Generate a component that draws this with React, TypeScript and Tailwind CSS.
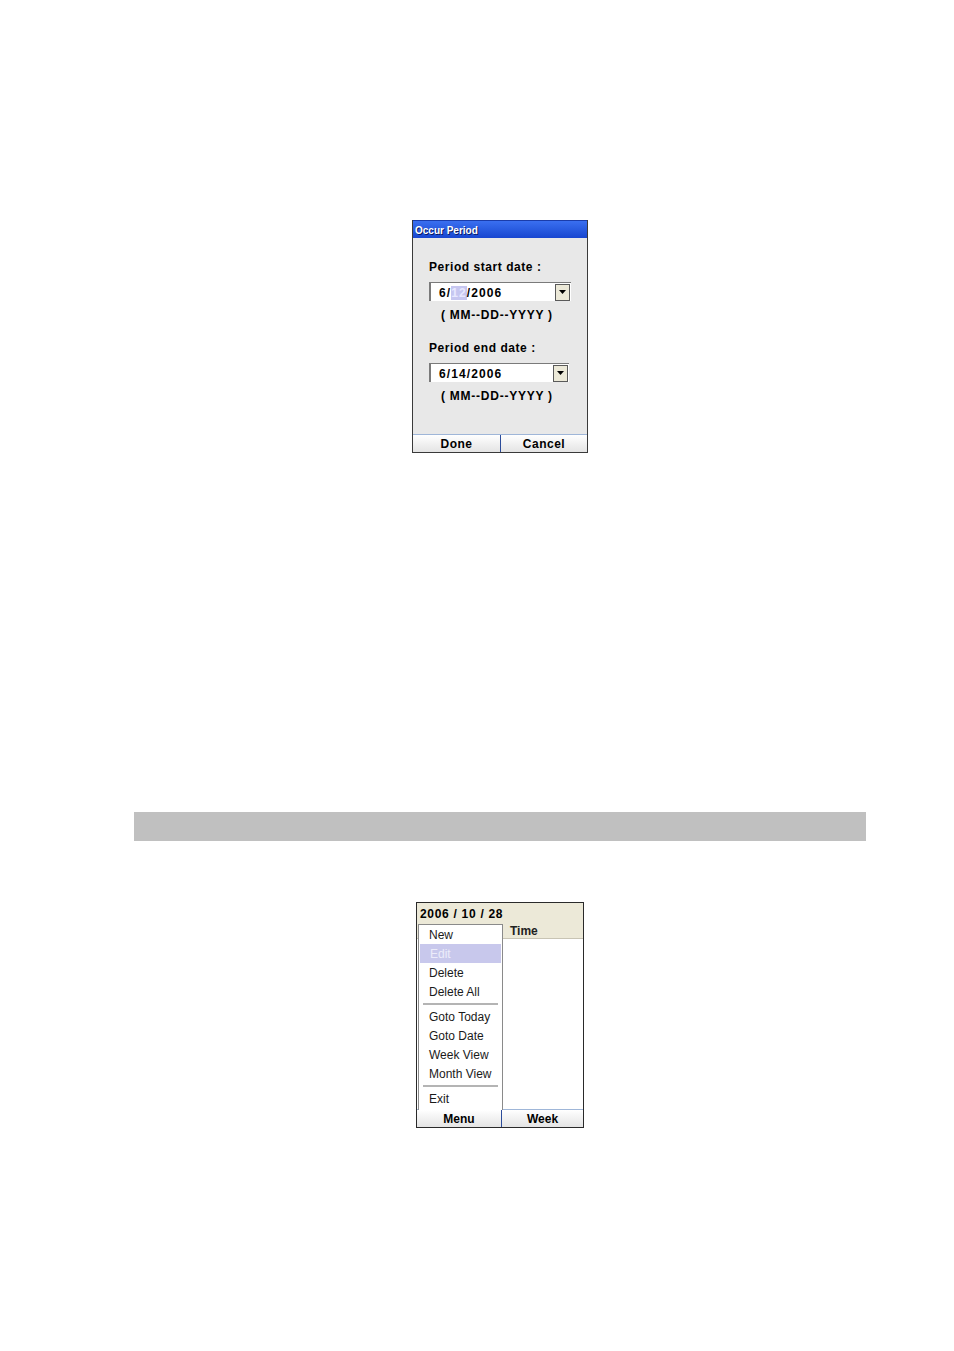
const font = { fontFamily: '"Liberation Sans", Arial, sans-serif' }

function DropArrow() {
  return (
    <div className="w-[15px] h-[17px] bg-[#ece9d8] border border-[#5a5a5a] flex items-center justify-center">
      <svg width="7" height="4" viewBox="0 0 7 4">
        <path d="M0 0 H7 L3.5 4 Z" fill="#000" />
      </svg>
    </div>
  )
}

function DateField({ width, children }: { width: string; children: React.ReactNode }) {
  return (
    <div className={`${width} h-[19px] bg-white border-t border-l-2 border-t-[#7a7a7a] border-l-[#7a7a7a] flex items-center justify-between pr-[1px]`}>
      <span className="pl-[8px] pt-[1px] text-[12px] font-bold text-black leading-none tracking-[1.1px]">{children}</span>
      <DropArrow />
    </div>
  )
}

function OccurPeriod() {
  return (
    <div className="ml-[412px] w-[176px] h-[233px] flex flex-col border border-[#3a3a3a] border-t-0 bg-[#e8e8e8]">
      <div className="h-[18px] bg-gradient-to-b from-[#3a6ff0] to-[#1846d0] border-t border-[#1a3caa] flex items-center pl-[2px] pt-[2px]">
        <span className="text-[10px] font-bold text-white leading-none [text-shadow:1px_1px_0_#0a1a60]">Occur Period</span>
      </div>
      <div className="flex-1 flex flex-col pl-[16px]">
        <div className="mt-[22px] h-[14px] text-[12px] font-bold text-black leading-[14px] tracking-[0.55px]">Period start date :</div>
        <div className="mt-[8px]">
          <DateField width="w-[142px]">
            6/<span className="bg-[#c6c6f0] text-[#e8e8ff]">12</span>/2006
          </DateField>
        </div>
        <div className="mt-[7px] pl-[12px] h-[14px] text-[12px] font-bold text-black leading-[14px] tracking-[0.75px]">( MM--DD--YYYY )</div>
        <div className="mt-[19px] h-[14px] text-[12px] font-bold text-black leading-[14px] tracking-[0.55px]">Period end date :</div>
        <div className="mt-[8px]">
          <DateField width="w-[140px]">6/14/2006</DateField>
        </div>
        <div className="mt-[7px] pl-[12px] h-[14px] text-[12px] font-bold text-black leading-[14px] tracking-[0.75px]">( MM--DD--YYYY )</div>
      </div>
      <div className="h-[18px] flex border-t border-[#9fb6d8] bg-gradient-to-b from-white to-[#e4e4e4]">
        <div className="w-[88px] flex items-center justify-center text-[12px] font-bold text-black tracking-[0.5px] border-r border-[#2c4c9a]">Done</div>
        <div className="flex-1 flex items-center justify-center text-[12px] font-bold text-black tracking-[0.5px]">Cancel</div>
      </div>
    </div>
  )
}

const menuItems: (string | null)[] = [
  'New',
  'Edit',
  'Delete',
  'Delete All',
  null,
  'Goto Today',
  'Goto Date',
  'Week View',
  'Month View',
  null,
  'Exit',
]

function PopupMenu() {
  return (
    <div className="absolute left-[1px] top-[21px] w-[85px] h-[186px] bg-white border border-[#8a8a8a] border-b-0 flex flex-col">
      {menuItems.map((item, i) =>
        item === null ? (
          <div key={i} className="h-[6px] flex items-center px-[4px]">
            <div className="w-full h-[2px] bg-[#b4b4b4]" />
          </div>
        ) : (
          <div
            key={i}
            className={`h-[19px] flex items-center pl-[10px] text-[12px] leading-none ${
              item === 'Edit' ? 'bg-[#c8c8ec] text-[#ececfa] mx-[1px] pl-[9px]' : 'text-[#1a1a1a]'
            }`}
          >
            {item}
          </div>
        )
      )}
    </div>
  )
}

function Calendar() {
  return (
    <div className="ml-[416px] w-[168px] h-[226px] relative flex flex-col border border-[#2a2a2a] bg-white">
      <div className="h-[20px] bg-[#ece9d8] flex items-center pl-[3px] pt-[1px]">
        <span className="text-[12px] font-bold text-black leading-none tracking-[0.7px]">2006 / 10 / 28</span>
      </div>
      <div className="h-[16px] bg-[#ece9d8] flex border-b border-[#c8c4b4]">
        <div className="w-[86px]" />
        <div className="flex-1 flex items-center pl-[7px] text-[12px] font-bold text-[#222] leading-none">Time</div>
      </div>
      <div className="flex-1" />
      <div className="h-[18px] flex border-t border-[#9fb6d8] bg-gradient-to-b from-white to-[#e4e4e4]">
        <div className="w-[85px] flex items-center justify-center text-[12px] font-bold text-black border-r border-[#2c4c9a]">Menu</div>
        <div className="flex-1 flex items-center justify-center text-[12px] font-bold text-black">Week</div>
      </div>
      <PopupMenu />
    </div>
  )
}

export default function App() {
  return (
    <div className="w-[954px] h-[1351px] bg-white flex flex-col" style={font}>
      <div className="h-[220px]" />
      <OccurPeriod />
      <div className="h-[359px]" />
      <div className="ml-[134px] w-[732px] h-[29px] bg-[#c0c0c0]" />
      <div className="h-[61px]" />
      <Calendar />
    </div>
  )
}
